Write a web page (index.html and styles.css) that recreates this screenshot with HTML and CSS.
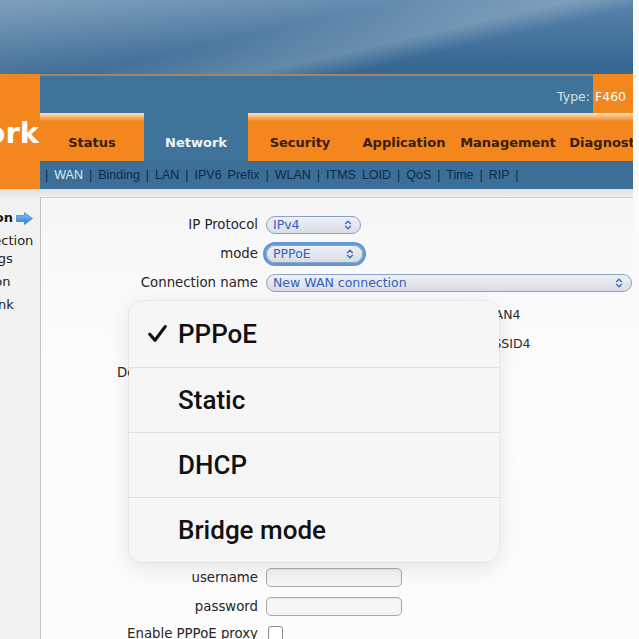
FILE: index.html
```html
<!DOCTYPE html>
<html>
<head>
<meta charset="utf-8">
<title>Network - WAN</title>
<link rel="stylesheet" href="styles.css">
</head>
<body>
<div class="page">
  <div class="banner"></div>
  <div class="top">
    <div class="brand"><span class="brand-text">Network</span></div>
    <div class="typebar">
      <div class="type-info">Type:</div>
      <div class="type-val">F460</div>
    </div>
    <nav class="tabs">
      <div class="tab">Status</div>
      <div class="tab active">Network</div>
      <div class="tab">Security</div>
      <div class="tab">Application</div>
      <div class="tab">Management</div>
      <div class="tab">Diagnostics</div>
    </nav>
    <div class="subnav">| <span class="cur">WAN</span> | Binding | LAN | IPV6 Prefix | WLAN | ITMS LOID | QoS | Time | RIP |</div>
  </div>
  <div class="strip"></div>
  <div class="main">
    <aside class="side">
      <div class="side-item side-head">Configuration
        <svg class="side-arrow" width="17" height="13" viewBox="0 0 17 13">
          <defs><linearGradient id="ag" x1="0" y1="0" x2="0" y2="1"><stop offset="0" stop-color="#8cc4f4"/><stop offset="1" stop-color="#2a78d6"/></linearGradient></defs>
          <path d="M0.5 3.5 H8.5 V0.5 L16.5 6.5 L8.5 12.5 V9.5 H0.5 Z" fill="url(#ag)" stroke="#2d6fc0" stroke-width="0.6"/>
        </svg>
      </div>
      <div class="side-item">Mobile Connection<br>Bridge Settings</div>
      <div class="side-item">Auto Detection</div>
      <div class="side-item">Ethernet Uplink</div>
    </aside>
    <section class="content">
      <div class="form">
        <div class="row">
          <span class="lbl">IP Protocol</span>
          <div class="sel sel-ip"><span>IPv4</span><svg class="updown" width="8" height="10" viewBox="0 0 8 10"><path d="M1.2 4 L4 1.3 L6.8 4 M1.2 6 L4 8.7 L6.8 6" fill="none" stroke="#3a6cc4" stroke-width="1.4"/></svg></div>
        </div>
        <div class="row">
          <span class="lbl">mode</span>
          <div class="sel sel-mode"><span>PPPoE</span><svg class="updown" width="8" height="10" viewBox="0 0 8 10"><path d="M1.2 4 L4 1.3 L6.8 4 M1.2 6 L4 8.7 L6.8 6" fill="none" stroke="#3a6cc4" stroke-width="1.4"/></svg></div>
        </div>
        <div class="row">
          <span class="lbl">Connection name</span>
          <div class="sel sel-name"><span>New WAN connection</span><svg class="updown" width="8" height="10" viewBox="0 0 8 10"><path d="M1.2 4 L4 1.3 L6.8 4 M1.2 6 L4 8.7 L6.8 6" fill="none" stroke="#3a6cc4" stroke-width="1.4"/></svg></div>
        </div>
        <div class="row row-gap">
          <span class="lbl">Port binding</span>
          <div class="opts opts-lan">
            <span class="opt"><span class="box"></span>LAN1</span>
            <span class="opt"><span class="box"></span>LAN2</span>
            <span class="opt"><span class="box"></span>LAN3</span>
            <span class="opt"><span class="box"></span>LAN4</span>
          </div>
        </div>
        <div class="row">
          <span class="lbl"></span>
          <div class="opts opts-ssid">
            <span class="opt"><span class="box"></span>SSID1</span>
            <span class="opt"><span class="box"></span>SSID2</span>
            <span class="opt"><span class="box"></span>SSID3</span>
            <span class="opt"><span class="box"></span>SSID4</span>
          </div>
        </div>
        <div class="row">
          <span class="lbl">Default Route Enable</span>
          <span class="box"></span>
        </div>
        <div class="row"><span class="lbl">Service List</span><input class="txt" type="text"></div>
        <div class="row"><span class="lbl">VLAN Mode</span><input class="txt" type="text"></div>
        <div class="row"><span class="lbl">VLAN ID</span><input class="txt" type="text"></div>
        <div class="row"><span class="lbl">802.1p</span><input class="txt" type="text"></div>
        <div class="row"><span class="lbl">MTU</span><input class="txt" type="text"></div>
        <div class="row"><span class="lbl">Authentication</span><input class="txt" type="text"></div>
        <div class="row row-user">
          <span class="lbl">username</span>
          <input class="txt" type="text">
        </div>
        <div class="row">
          <span class="lbl">password</span>
          <input class="txt" type="password">
        </div>
        <div class="row row-short">
          <span class="lbl">Enable PPPoE proxy</span>
          <input class="chk" type="checkbox">
        </div>
      </div>

      <div class="popover">
        <div class="pop-item">
          <svg class="check" width="19" height="19" viewBox="0 0 19 19"><path d="M1.8 10.2 L7 16.2 L17.2 2.6" fill="none" stroke="#111" stroke-width="3.2" stroke-linecap="round" stroke-linejoin="round"/></svg>
          PPPoE
        </div>
        <div class="pop-item">Static</div>
        <div class="pop-item">DHCP</div>
        <div class="pop-item">Bridge mode</div>
      </div>
    </section>
  </div>
</div>
</body>
</html>
```

FILE: styles.css
```css
body {
  margin: 0;
  background: #fbfbfb;
  font-family: "DejaVu Sans", Verdana, sans-serif;
}

.page {
  width: 633px;
  height: 639px;
  overflow: hidden;
  position: relative;
}

.banner {
  height: 74px;
  background:
    linear-gradient(167deg, rgba(255,255,255,0.22) 0%, rgba(255,255,255,0.06) 42%, rgba(255,255,255,0.22) 60%, rgba(255,255,255,0) 70%),
    linear-gradient(#5b85ab, #3d6d97 70%, #35668f);
}

.top {
  display: grid;
  grid-template-columns: 40px 1fr;
  grid-template-rows: 39px 48px 28px;
}

.brand {
  grid-row: 1 / 4;
  background: #f3861c;
  display: flex;
  justify-content: flex-end;
  overflow: hidden;
  padding: 44px 1px 0 0;
}

.brand-text {
  font: bold 29px/30px "DejaVu Sans", sans-serif;
  color: #ffffff;
  white-space: nowrap;
}

.typebar {
  display: flex;
  background: #3f7399;
}

.type-info {
  flex: 1;
  border-top: 2px solid #a38668;
  display: flex;
  justify-content: flex-end;
  align-items: flex-end;
  padding: 0 3px 8px 0;
  color: #d3e1ec;
  font-size: 12.5px;
  line-height: 16px;
}

.type-val {
  width: 40px;
  box-sizing: border-box;
  background: #f3861c;
  color: #ffffff;
  display: flex;
  align-items: flex-end;
  padding: 0 0 8px 2px;
  font-size: 12.5px;
  line-height: 16px;
}

.tabs {
  display: flex;
  background: #3f7399;
  overflow: hidden;
}

.tab {
  flex: 0 0 104px;
  text-align: center;
  font: bold 13px/16px "DejaVu Sans", sans-serif;
  color: #3a1d06;
  padding-top: 22px;
  box-sizing: border-box;
  background: linear-gradient(#fde3c6, #f7a857 5px, #f3861c 9px, #f3861c);
  white-space: nowrap;
}

.tab.active {
  background: none;
  color: #eef3f8;
}

.subnav {
  grid-column: 2;
  background: #3c6f97;
  color: #0e274a;
  font: 12.5px/28px "Liberation Sans", Arial, sans-serif;
  word-spacing: 2.5px;
  padding-left: 5px;
  white-space: nowrap;
  overflow: hidden;
}

.subnav .cur {
  color: #dce8f3;
}

.strip {
  height: 8px;
  background: linear-gradient(#e0e0e0, #eeeeee);
}

.main {
  display: grid;
  grid-template-columns: 40px 1fr;
  height: 442px;
}

.side {
  background: #f2f2f2;
  overflow: hidden;
  padding-top: 12px;
  display: flex;
  flex-direction: column;
  gap: 5px;
  font-size: 13px;
  line-height: 18px;
  color: #222222;
}

.side-item {
  margin-left: -87px;
  white-space: nowrap;
}

.side-head {
  font-weight: bold;
  display: flex;
  align-items: center;
  gap: 3px;
  color: #1a1a1a;
}

.side-arrow {
  flex-shrink: 0;
}

.content {
  position: relative;
  border-left: 1px solid #c4c4c4;
  border-top: 1px solid #cfcfcf;
  background: linear-gradient(#f6f6f6, #fdfdfd 40%, #fcfcfc);
}

.form {
  padding-top: 12px;
}

.row {
  display: flex;
  align-items: center;
  height: 29px;
}

.row-gap {
  margin-top: 3px;
}

.row-user {
  margin-top: 2px;
}

.row-short {
  height: 25px;
}

.lbl {
  flex: 0 0 217px;
  margin-right: 8px;
  text-align: right;
  font-size: 13.3px;
  color: #262626;
  white-space: nowrap;
}

.sel {
  height: 18px;
  box-sizing: border-box;
  border: 1px solid #8ca2c4;
  border-radius: 9px;
  background: linear-gradient(#eef0f4, #d9dde5);
  color: #2f62c0;
  font-size: 12.5px;
  line-height: 16px;
  padding: 0 8px 0 6px;
  display: flex;
  align-items: center;
  justify-content: space-between;
}

.sel-ip {
  width: 95px;
}

.sel-mode {
  width: 97px;
  box-shadow: 0 0 0 3px #5f98dc;
}

.sel-name {
  flex: 1;
  margin-right: 1px;
}

.updown {
  flex-shrink: 0;
}

.opts {
  display: flex;
  font-size: 12.5px;
  color: #2b2b2b;
}

.opts-lan {
  gap: 18px;
}

.opts-ssid {
  gap: 16px;
}

.opt {
  display: flex;
  align-items: center;
  gap: 4px;
}

.box {
  width: 13px;
  height: 13px;
  box-sizing: border-box;
  border: 1px solid #8a8a8a;
  border-radius: 3px;
  background: #ffffff;
}

.txt {
  appearance: none;
  width: 136px;
  height: 19px;
  box-sizing: border-box;
  margin: 0;
  border: 1px solid #a9a9a9;
  border-radius: 5px;
  background: #f6f6f6;
  box-shadow: inset 0 1px 1px rgba(0,0,0,0.06);
}

.chk {
  appearance: none;
  width: 15px;
  height: 15px;
  margin: 0 0 0 2px;
  border: 1px solid #8a8a8a;
  border-radius: 3px;
  background: #ffffff;
}

.popover {
  position: absolute;
  left: 88px;
  top: 103px;
  width: 370px;
  border-radius: 14px;
  background: #f6f6f6;
  box-shadow: 0 6px 24px rgba(0,0,0,0.10), 0 0 0 1px rgba(0,0,0,0.04);
  overflow: hidden;
}

.pop-item {
  position: relative;
  height: 65px;
  box-sizing: border-box;
  display: flex;
  align-items: center;
  padding-left: 49px;
  border-top: 1px solid #dedede;
  font: 500 26px Roboto, "Noto Sans", sans-serif;
  color: #111111;
}

.pop-item:first-child {
  border-top: 0;
  height: 66px;
}

.check {
  position: absolute;
  left: 19px;
  top: 23px;
}
```
